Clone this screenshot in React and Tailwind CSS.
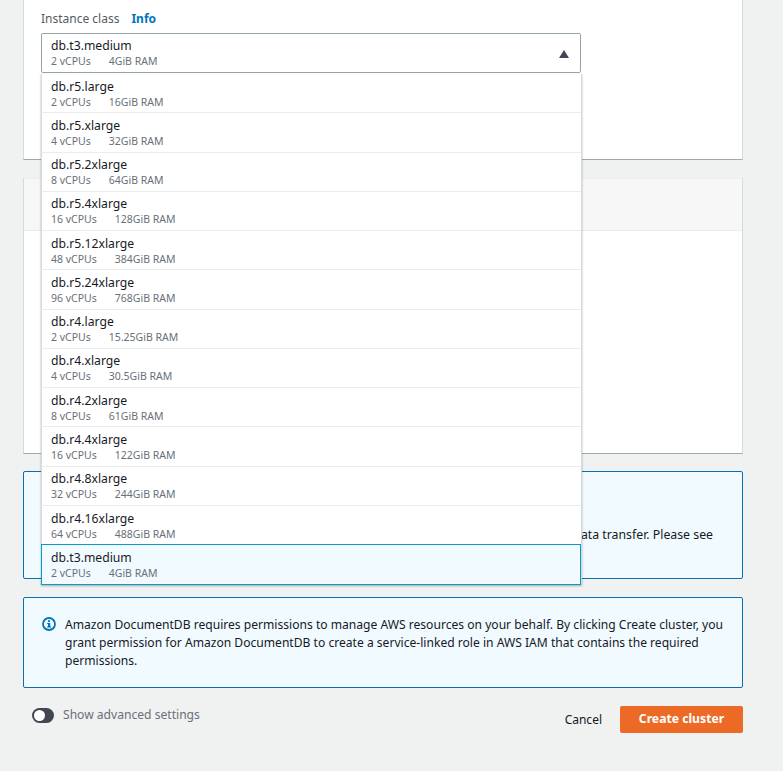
import React from 'react';

const options = [
    ['db.r5.large', '2 vCPUs', '16GiB RAM'],
    ['db.r5.xlarge', '4 vCPUs', '32GiB RAM'],
    ['db.r5.2xlarge', '8 vCPUs', '64GiB RAM'],
    ['db.r5.4xlarge', '16 vCPUs', '128GiB RAM'],
    ['db.r5.12xlarge', '48 vCPUs', '384GiB RAM'],
    ['db.r5.24xlarge', '96 vCPUs', '768GiB RAM'],
    ['db.r4.large', '2 vCPUs', '15.25GiB RAM'],
    ['db.r4.xlarge', '4 vCPUs', '30.5GiB RAM'],
    ['db.r4.2xlarge', '8 vCPUs', '61GiB RAM'],
    ['db.r4.4xlarge', '16 vCPUs', '122GiB RAM'],
    ['db.r4.8xlarge', '32 vCPUs', '244GiB RAM'],
    ['db.r4.16xlarge', '64 vCPUs', '488GiB RAM'],
];

const OptionText = ({ name, cpu, ram }) => (
    <>
        <div className="text-[12.2px] leading-[16px] text-[#16191f]">{name}</div>
        <div className="flex text-[10.5px] leading-[14px] text-[#687078]">
            <span className="mr-[18px]">{cpu}</span>
            <span>{ram}</span>
        </div>
    </>
);

const InfoIcon = () => (
    <svg width="14" height="14" viewBox="0 0 14 14" className="shrink-0 mt-[1px]">
        <circle cx="7" cy="7" r="6" fill="none" stroke="#0073bb" strokeWidth="1.8" />
        <rect x="6" y="6" width="2.2" height="4" fill="#0073bb" />
        <rect x="5.2" y="9.4" width="3.8" height="1.2" fill="#0073bb" />
        <rect x="5.2" y="6" width="1" height="1" fill="#0073bb" />
        <circle cx="7" cy="4.1" r="1.15" fill="#0073bb" />
    </svg>
);

const App = () => {
    return (
        <div className="w-[783px] h-[771px] overflow-hidden bg-[#f0f1f1] pl-[23px] pr-[40px] font-['Noto_Sans',sans-serif]">
            {/* instance class card */}
            <div className="relative h-[160px] bg-white border-x border-b border-x-[#d5dbdb] border-b-[#a0a8a8] px-[17px] pt-[11px]">
                <div className="flex items-center gap-[12px] text-[12px] leading-[16px]">
                    <span className="text-[#545b64]">Instance class</span>
                    <span className="font-bold text-[#0073bb]">Info</span>
                </div>
                <div className="mt-[6px] h-[40px] w-[540px] border border-[#95a5a6] rounded-[2px] pl-[9px] pt-[4px] flex justify-between">
                    <div>
                        <OptionText name="db.t3.medium" cpu="2 vCPUs" ram="4GiB RAM" />
                    </div>
                    <svg width="10" height="8" viewBox="0 0 10 8" className="mt-[12px] mr-[11px]">
                        <path d="M5 0 L10 8 L0 8 Z" fill="#414750" />
                    </svg>
                </div>

                {/* open dropdown list */}
                <div className="absolute left-[17px] top-[74px] w-[541px] z-10 bg-white border-r border-[#d5dbdb] shadow-[0_1px_2px_rgba(0,0,0,0.3)]">
                    {options.map(([name, cpu, ram]) => (
                        <div key={name} className="h-[39.27px] border-b border-[#eaeded] border-l border-l-[#d5dbdb] pl-[9px] pt-[4.6px]">
                            <OptionText name={name} cpu={cpu} ram={ram} />
                        </div>
                    ))}
                    <div className="-mt-px h-[41px] w-[540px] bg-[#f1faff] border border-[#0a9ac9] pl-[9px] pt-[5px] relative">
                        <OptionText name="db.t3.medium" cpu="2 vCPUs" ram="4GiB RAM" />
                    </div>
                </div>
            </div>

            {/* second card, mostly hidden behind the list */}
            <div className="mt-[18px] h-[276px] bg-white border-x border-b border-x-[#d5dbdb] border-b-[#a0a8a8]">
                <div className="h-[53px] bg-[#f7f7f7] border-y border-[#eaeded]" />
            </div>

            {/* data transfer alert */}
            <div className="mt-[17px] h-[108px] bg-[#f1faff] border border-[#0b6eb0] rounded-[2px] pt-[54px] pr-[29px] text-right text-[12.3px] leading-[18px] text-[#16191f]">
                ata transfer. Please see
            </div>

            {/* permissions alert */}
            <div className="mt-[18px] h-[91px] bg-[#f1faff] border border-[#0b6eb0] rounded-[2px] pl-[18px] pr-[16px] pt-[18px] flex gap-[9px]">
                <InfoIcon />
                <p className="text-[12.1px] leading-[18px] text-[#16191f]">
                    Amazon DocumentDB requires permissions to manage AWS resources on your behalf. By clicking Create cluster, you grant permission for Amazon DocumentDB to create a service-linked role in AWS IAM that contains the required permissions.
                </p>
            </div>

            {/* footer */}
            <div className="mt-[18px] flex items-start justify-between">
                <div className="flex items-center ml-[9px] gap-[9px] h-[18px]">
                    <div className="w-[22px] h-[15px] rounded-full bg-[#414750] flex items-center pl-[2px]">
                        <div className="w-[11px] h-[11px] rounded-full bg-white" />
                    </div>
                    <span className="text-[12.1px] text-[#687078]">Show advanced settings</span>
                </div>
                <div className="flex items-center gap-[18px]">
                    <span className="text-[12px] text-[#16191f]">Cancel</span>
                    <button className="w-[123px] h-[27px] bg-[#ec6a25] rounded-[2px] text-[12.2px] font-bold text-white">
                        Create cluster
                    </button>
                </div>
            </div>
        </div>
    );
};

export default App;
